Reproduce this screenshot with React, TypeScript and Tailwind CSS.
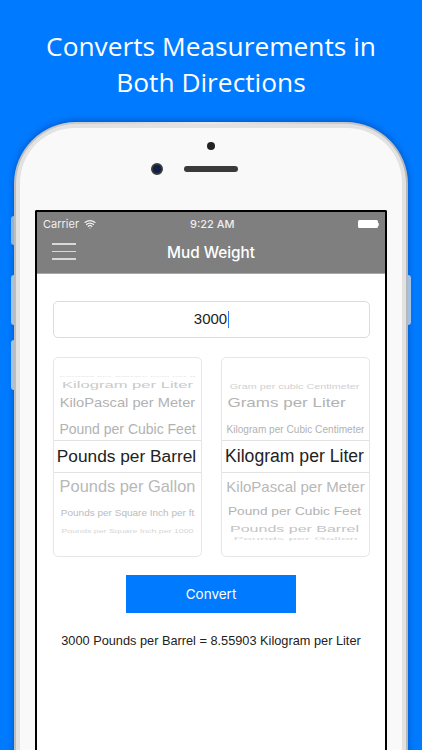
import { Wifi } from "lucide-react";

type Row = { label: string; box: string; text: string };

const leftTop: Row[] = [
  { label: "Pounds per Square Inch per ft", box: "h-[12px]", text: "text-[10.2px] scale-y-[0.2] text-[#e2e2e2]" },
  { label: "Kilogram per Liter", box: "h-[6px]", text: "text-[16.6px] scale-y-[0.6] text-[#cacaca]" },
  { label: "KiloPascal per Meter", box: "h-[30px]", text: "text-[14.7px] scale-y-[0.85] text-[#b2b2b2]" },
  { label: "Pound per Cubic Feet", box: "h-[22px]", text: "text-[14px] text-[#b2b2b2]" },
];
const leftBottom: Row[] = [
  { label: "Pounds per Gallon", box: "h-[27px]", text: "text-[16.4px] text-[#b8b8b8]" },
  { label: "Pounds per Square Inch per ft", box: "h-[25px]", text: "text-[10px] scale-y-[0.9] text-[#bcbcbc]" },
  { label: "Pounds per Square Inch per 1000", box: "h-[12px]", text: "text-[8.8px] scale-y-[0.55] text-[#d6d6d6]" },
];
const rightTop: Row[] = [
  { label: "Gram per cubic Centimeter", box: "h-[4px]", text: "text-[10.8px] scale-y-[0.65] -translate-x-[1px] text-[#d0d0d0]" },
  { label: "Grams per Liter", box: "h-[32px]", text: "text-[17px] scale-y-[0.8] -translate-x-[9px] -translate-y-[2px] text-[#b2b2b2]" },
  { label: "Kilogram per Cubic Centimeter", box: "h-[20px]", text: "text-[10.1px] text-[#b2b2b2]" },
];
const rightBottom: Row[] = [
  { label: "KiloPascal per Meter", box: "h-[27px]", text: "text-[15px] text-[#b8b8b8]" },
  { label: "Pound per Cubic Feet", box: "h-[23px]", text: "text-[13.7px] scale-y-[0.85] -translate-x-[1px] text-[#b2b2b2]" },
  { label: "Pounds per Barrel", box: "h-[12px]", text: "text-[16px] scale-y-[0.55] -translate-x-[1px] text-[#c4c4c4]" },
  { label: "Pounds per Gallon", box: "h-[6px]", text: "text-[15px] scale-y-[0.25] text-[#d6d6d6]" },
];

function WheelRow({ row }: { row: Row }) {
  return (
    <div className={`flex items-center justify-center ${row.box}`}>
      <span className={`block whitespace-nowrap leading-none ${row.text}`}>{row.label}</span>
    </div>
  );
}

function Wheel({ top, selected, bottom, size }: { top: Row[]; selected: string; bottom: Row[]; size: string }) {
  return (
    <div className="h-[200px] w-[149px] overflow-hidden rounded-[5px] border border-[#e6e6e6] font-['Liberation_Sans',sans-serif]">
      <div className="flex h-[82px] flex-col justify-end">
        {top.map((row) => (
          <WheelRow key={row.label} row={row} />
        ))}
      </div>
      <div className={`flex h-[33px] items-center justify-center whitespace-nowrap border-y border-[#e2e2e2] pr-[2px] text-[#222] ${size}`}>
        {selected}
      </div>
      {bottom.map((row) => (
        <WheelRow key={row.label} row={row} />
      ))}
    </div>
  );
}

export default function App() {
  return (
    <div className="h-[750px] w-[422px] overflow-hidden bg-[#007aff]">
      <h1 className="flex h-[122px] flex-col items-center pt-[28px] font-['Open_Sans',sans-serif] text-[26.3px] leading-[36px] text-white">
        <span>Converts Measurements in</span>
        <span>Both Directions</span>
      </h1>

      {/* Phone body */}
      <div className="relative mx-[14px] h-[700px] w-[394px] rounded-t-[62px] bg-gradient-to-r from-[#bdbdbd] via-[#e8e8e8] to-[#b8b8b8] p-[2px] shadow-[0_-1px_6px_rgba(0,40,110,0.45)]">
        {/* Side buttons */}
        <div className="absolute -left-[3px] top-[94px] h-[29px] w-[3px] rounded-l-sm bg-[#8fb4dc]" />
        <div className="absolute -left-[3px] top-[153px] h-[50px] w-[3px] rounded-l-sm bg-[#a3c2e3]" />
        <div className="absolute -left-[3px] top-[218px] h-[50px] w-[3px] rounded-l-sm bg-[#a3c2e3]" />
        <div className="absolute -right-[3px] top-[153px] h-[50px] w-[3px] rounded-r-sm bg-[#a3c2e3]" />

        <div className="h-full rounded-t-[60px] bg-[#e2e2e2] px-[4px] pt-[4px]">
          <div className="flex h-full flex-col rounded-t-[55px] bg-[#f9f9f9] px-[15px]">
            {/* Camera and speaker */}
            <div className="flex h-[82px] shrink-0 flex-col items-center">
              <div className="mt-[14px] h-[8px] w-[8px] rounded-full bg-[#222]" />
              <div className="mt-[13px] flex w-full items-center pl-[116px]">
                <div className="h-[12px] w-[12px] rounded-full border-[2px] border-[#3a3a3a] bg-[#0f1f45]" />
                <div className="ml-[21px] h-[6px] w-[54px] rounded-full bg-[#3a3a3a]" />
              </div>
            </div>

            {/* Screen */}
            <div className="h-[600px] shrink-0 rounded-t-[2px] border-x-[2px] border-t-[2px] border-black bg-white">
              <div className="h-[62px] border-b border-[#a8a8a8] bg-[#7f7f7f] text-white">
                <div className="relative flex h-[22px] items-center justify-between px-[6px] pt-[2px] font-['Inter',sans-serif] text-[11px] text-[#f0f0f0]">
                  <div className="flex items-center gap-[5px]">
                    <span>Carrier</span>
                    <Wifi size={12} strokeWidth={2.5} />
                  </div>
                  <span className="absolute left-[153px] font-medium">9:22 AM</span>
                  <div className="flex items-center">
                    <div className="h-[8px] w-[20px] rounded-[1.5px] bg-white" />
                    <div className="h-[3px] w-[1px] bg-[#e0e0e0]" />
                  </div>
                </div>
                <div className="relative flex h-[39px] items-center justify-center font-['Inter',sans-serif] text-[15.3px] font-medium">
                  <div className="absolute left-[15px] top-[9px] flex w-[24px] flex-col gap-[6px]">
                    <div className="h-[1.5px] bg-[#d9d9d9]" />
                    <div className="h-[1.5px] bg-[#d9d9d9]" />
                    <div className="h-[1.5px] bg-[#d9d9d9]" />
                  </div>
                  Mud Weight
                </div>
              </div>

              <div className="flex flex-col px-[16px] pt-[27px]">
                <div className="flex h-[37px] w-[317px] items-center justify-center rounded-[5px] border border-[#dcdcdc] font-['Liberation_Sans',sans-serif] text-[15px] text-[#222]">
                  3000
                  <span className="ml-[1px] h-[17px] w-[1px] bg-[#3478f6]" />
                </div>

                <div className="mt-[19px] flex w-[317px] justify-between">
                  <Wheel top={leftTop} selected="Pounds per Barrel" bottom={leftBottom} size="text-[17.3px]" />
                  <Wheel top={rightTop} selected="Kilogram per Liter" bottom={rightBottom} size="text-[17.6px]" />
                </div>

                <button className="mx-auto mt-[18px] h-[38px] w-[170px] bg-[#007aff] font-['Inter',sans-serif] text-[13.5px] text-white">
                  Convert
                </button>

                <p className="mt-[18px] whitespace-nowrap text-center font-['Liberation_Sans',sans-serif] text-[12.75px] text-[#222]">
                  3000 Pounds per Barrel = 8.55903 Kilogram per Liter
                </p>
              </div>
            </div>
          </div>
        </div>
      </div>
    </div>
  );
}
